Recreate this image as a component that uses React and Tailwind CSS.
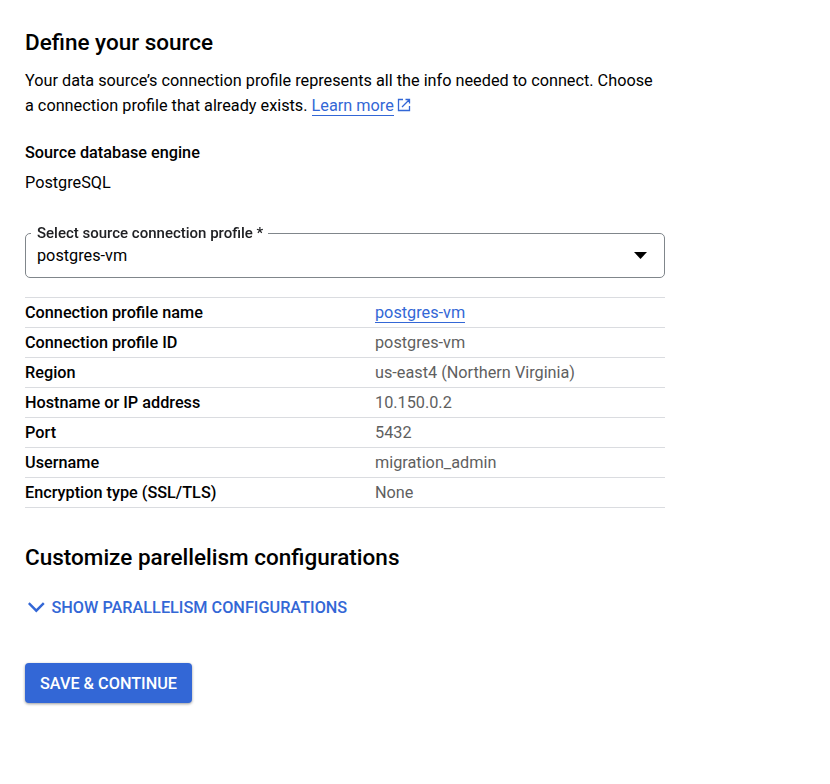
const rows = [
  ["Connection profile name", "postgres-vm", true],
  ["Connection profile ID", "postgres-vm"],
  ["Region", "us-east4 (Northern Virginia)"],
  ["Hostname or IP address", "10.150.0.2"],
  ["Port", "5432"],
  ["Username", "migration_admin"],
  ["Encryption type (SSL/TLS)", "None"],
];

export default function App() {
  return (
    <main className="min-h-screen bg-white pl-[25px] pt-[27px] font-['Roboto',sans-serif] text-[16.25px] text-black">
      <div className="w-[640px]">
        <h1 className="text-[22.5px] leading-[31px] font-medium">Define your source</h1>
        <p className="mt-[10px] leading-[25px]">
          Your data source’s connection profile represents all the info needed to connect. Choose a connection profile that already exists.{" "}
          <a className="whitespace-nowrap text-[#3367d6]">
            <span className="border-b border-[#3367d6]">Learn more</span>
            <svg className="ml-[3px] inline size-[14px] align-[-1px]" viewBox="0 0 14 14" fill="none" stroke="currentColor" strokeWidth="1.3">
              <path d="M6 1.5H1.5v11h11V8M8.5 1.5h4V5.5M12.5 1.5 5 9" />
            </svg>
          </a>
        </p>
        <h2 className="mt-[22px] leading-[25px] font-medium">Source database engine</h2>
        <p className="mt-[5px] leading-[25px]">PostgreSQL</p>

        <fieldset className="mt-[29px] h-[54px] rounded-[5px] border border-[#80868b] pl-[5px]">
          <legend className="h-[18px] pr-[5px] pl-[6px] text-[15px] leading-[16px] font-medium text-[#202124]">
            <span className="inline-block translate-y-[0.5px] will-change-transform">Select source connection profile *</span>
          </legend>
          <div className="flex items-center justify-between pt-[1px] pr-[17px] pl-[6px] leading-[25px]">
            <span>postgres-vm</span>
            <svg className="h-[7px] w-[13px]" viewBox="0 0 13 7"><path d="M0 0h13L6.5 7z" /></svg>
          </div>
        </fieldset>

        <dl className="mt-[19px] border-t border-[#dadce0]">
          {rows.map(([label, value, link]) => (
            <div key={label} className="flex h-[30px] items-center border-b border-[#dadce0] leading-[25px]">
              <dt className="w-[350px] font-medium">{label}</dt>
              <dd className="text-[#5f5f5f]">
                {link ? <a className="border-b border-[#3367d6] text-[#3367d6]">{value}</a> : value}
              </dd>
            </div>
          ))}
        </dl>

        <h1 className="mt-[34px] text-[22.5px] leading-[31px] font-medium">Customize parellelism configurations</h1>
        <button className="mt-[22px] flex h-[25px] items-center gap-[7px] pl-[2.5px] font-medium text-[#3367d6]">
          <svg className="h-[11px] w-[17px]" viewBox="0 0 17 11" fill="none" stroke="currentColor" strokeWidth="2.4"><path d="m.8 1.2 7.5 7.5 7.5-7.5" /></svg>
          <span className="pt-[2px]">SHOW PARALLELISM CONFIGURATIONS</span>
        </button>
        <button className="mt-[43px] h-[40px] w-[167px] rounded-[4px] bg-[#3367d6] pt-[2px] font-medium text-white shadow-[0_1px_3px_rgba(0,0,0,0.4)]">SAVE &amp; CONTINUE</button>
      </div>
    </main>
  );
}
